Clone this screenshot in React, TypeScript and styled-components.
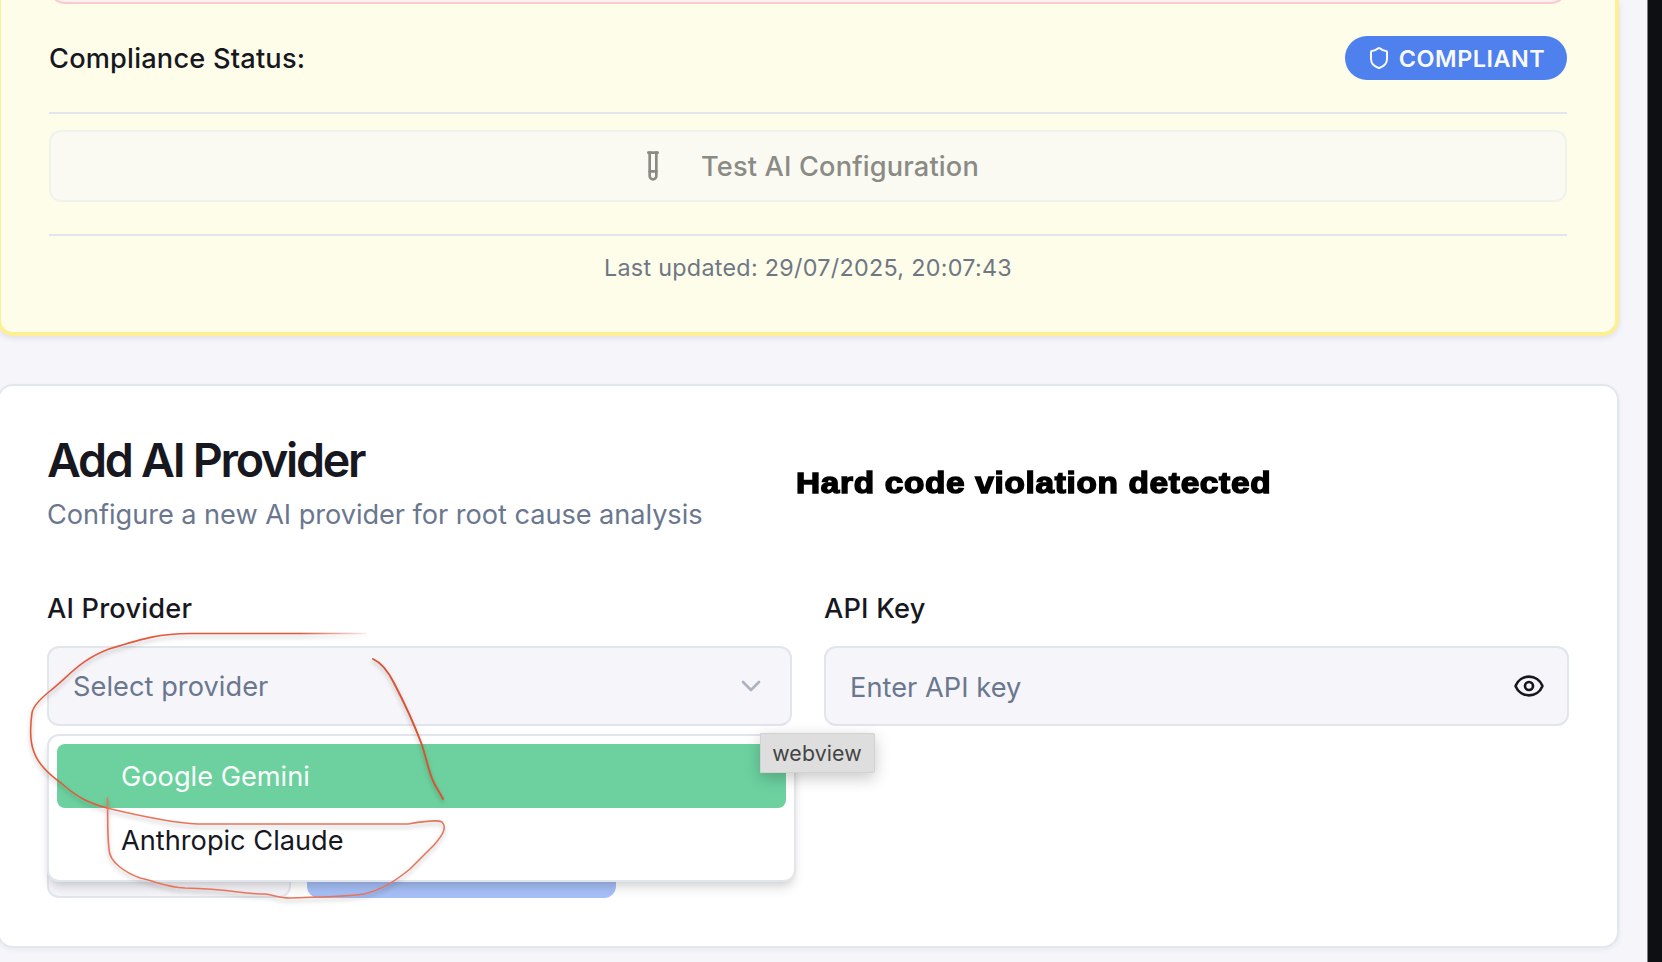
import React from "react";
import styled, { createGlobalStyle, css } from "styled-components";
import { ChevronDown, Eye, Shield, TestTube } from "lucide-react";

const GlobalStyle = createGlobalStyle`
  *, *::before, *::after { box-sizing: border-box; }
  html, body { margin: 0; padding: 0; overflow: hidden; }
  body { font-family: Inter, "Liberation Sans", sans-serif; color: #17181f; background: #f5f5fa; }
  button, input { font: inherit; margin: 0; }
`;

const Screen = styled.div`
  position: relative;
  display: flex;
  width: 1662px;
  height: 962px;
  overflow: hidden;
`;

const Main = styled.main`
  flex: 1;
  display: flex;
  flex-direction: column;
  gap: 48px;
  margin-left: -3px;
  padding-right: 28px;
  background: #f5f5fa;
`;

const Gutter = styled.aside`
  flex: none;
  width: 15px;
  background: #0e0f13;
  border-left: 1px solid #7c7c82;
`;

const StatusCard = styled.section`
  display: flex;
  flex-direction: column;
  height: 336px;
  padding: 0 48px;
  border: 4px solid #fdef93;
  border-top: 0;
  border-radius: 0 0 16px 16px;
  background: #fefdea;
  box-shadow: 0 2px 6px rgba(30, 30, 60, 0.1);
`;

const AlertEdge = styled.div`
  flex: none;
  height: 4px;
  overflow: hidden;
  display: flex;
  align-items: flex-end;

  &::after {
    content: "";
    flex: 1;
    height: 40px;
    border: 2px solid #f9cbca;
    border-radius: 16px;
    background: #fbf1f3;
  }
`;

const StatusRow = styled.div`
  display: flex;
  align-items: center;
  justify-content: space-between;
  height: 44px;
  margin-top: 32px;
`;

const Label = styled.div`
  height: 40px;
  padding-top: 1px;
  font-size: 27.2px;
  line-height: 40px;
  font-weight: 500;
  letter-spacing: 0.2px;
  color: #17181f;
`;

const Badge = styled.span`
  display: inline-flex;
  align-items: center;
  justify-content: center;
  gap: 8px;
  width: 222px;
  height: 44px;
  border-radius: 22px;
  background: #4e80ee;
  color: #f8faff;
  font-size: 23.4px;
  font-weight: 600;
  letter-spacing: 0.5px;
`;

const Divider = styled.hr`
  flex: none;
  width: 100%;
  height: 2px;
  margin: 32px 0 0;
  border: 0;
  background: #e2e6ec;
`;

const TestButton = styled.button`
  display: flex;
  align-items: center;
  justify-content: center;
  gap: 32px;
  height: 72px;
  margin-top: 16px;
  padding: 0;
  border: 2px solid #f0f2ec;
  border-radius: 12px;
  background: #fafaf2;
  color: #8b8b85;
  font-size: 27.2px;
  font-weight: 500;
  letter-spacing: 0.16px;
`;

const Updated = styled.p`
  margin: 16px 0 0;
  text-align: center;
  font-size: 23.3px;
  line-height: 32px;
  letter-spacing: 0.3px;
  color: #6f7785;
`;

const ProviderCard = styled.section`
  display: flex;
  flex-direction: column;
  height: 564px;
  padding: 48px;
  border: 2px solid #e2e6ed;
  border-radius: 16px;
  background: #fff;
  box-shadow: 0 2px 5px rgba(30, 30, 60, 0.06);
`;

const CardTitle = styled.h2`
  margin: 2px 0 0;
  font-size: 46.6px;
  line-height: 48px;
  font-weight: 600;
  letter-spacing: -2.27px;
`;

const CardText = styled.p`
  margin: 11px 0 0;
  font-size: 27.2px;
  line-height: 40px;
  letter-spacing: -0.06px;
  color: #6a778e;
`;

const FormGrid = styled.div`
  display: grid;
  grid-template-columns: 1fr 1fr;
  gap: 32px;
  margin-top: 53px;
`;

const Field = styled.div`
  position: relative;
  display: flex;
  flex-direction: column;
  gap: 18px;
`;

const Control = styled.div<{ $iconNudge?: number }>`
  display: flex;
  align-items: center;
  justify-content: space-between;
  height: 80px;
  padding: 0 24px;
  border: 2px solid #e1e6ec;
  border-radius: 12px;
  background: #f5f5fa;
  color: #6a778e;

  svg {
    flex: none;
    margin-right: ${(p) => -(p.$iconNudge ?? 0)}px;
  }
`;

const Placeholder = styled.span<{ $drop: number }>`
  padding-top: ${(p) => p.$drop * 2}px;
  font-size: 27.2px;
  line-height: 40px;
  letter-spacing: 0.05px;
`;

const Menu = styled.ul`
  position: absolute;
  z-index: 2;
  top: 146px;
  left: 0;
  width: 749px;
  height: 148px;
  margin: 0;
  padding: 8px;
  list-style: none;
  border: 2px solid #e1e6ec;
  border-radius: 12px;
  background: #fff;
  box-shadow: 0 8px 12px -2px rgba(0, 0, 0, 0.12), 0 4px 8px -4px rgba(0, 0, 0, 0.12);
`;

const MenuItem = styled.li<{ $active?: boolean }>`
  display: flex;
  align-items: center;
  height: 64px;
  padding-left: 64px;
  border-radius: 8px;
  font-size: 27.2px;
  ${(p) =>
    p.$active &&
    css`
      background: #6cd19f;
      color: #fafffc;
    `}
`;

const Actions = styled.div`
  display: flex;
  gap: 16px;
  margin-top: auto;
`;

const ActionButton = styled.button<{ $primary?: boolean }>`
  width: ${(p) => (p.$primary ? 309 : 244)}px;
  height: 72px;
  border: ${(p) => (p.$primary ? "0" : "2px solid #e4e6ee")};
  border-radius: 12px;
  background: ${(p) => (p.$primary ? "#a6bff6" : "#f5f5fa")};
`;

const Tooltip = styled.div`
  position: absolute;
  z-index: 3;
  top: 733px;
  left: 760px;
  width: 115px;
  height: 40px;
  display: flex;
  align-items: center;
  justify-content: center;
  padding-right: 1px;
  border: 1px solid #d2d2d2;
  border-radius: 0 2px 2px 0;
  background: #dedede;
  box-shadow: 0 5px 16px rgba(0, 0, 0, 0.22);
  color: #444;
  font-size: 21.3px;
  letter-spacing: 0.15px;
`;

const Note = styled.div`
  position: absolute;
  z-index: 3;
  top: 465px;
  left: 796px;
  font-family: "Liberation Sans", Arial, sans-serif;
  font-size: 29px;
  line-height: 36px;
  font-weight: 700;
  letter-spacing: 0.6px;
  white-space: nowrap;
  color: #000;
  -webkit-text-stroke: 1.4px #000;
  transform: scaleX(1.15);
  transform-origin: left center;
`;

const Scribble = styled.svg`
  position: absolute;
  z-index: 4;
  top: 0;
  left: 0;
  pointer-events: none;
  filter: drop-shadow(0 3px 2px rgba(0, 0, 0, 0.25));
`;

function Annotations() {
  return (
    <Scribble width="500" height="962" fill="none" strokeLinecap="round" strokeLinejoin="round" strokeWidth="1.6">
      <defs>
        <linearGradient id="fade" gradientUnits="userSpaceOnUse" x1="30" y1="0" x2="368" y2="0">
          <stop offset="0" stopColor="#e4593b" />
          <stop offset="0.8" stopColor="#e4593b" />
          <stop offset="1" stopColor="#e4593b" stopOpacity="0.1" />
        </linearGradient>
      </defs>
      <path
        stroke="url(#fade)"
        d="M366 633.5H190C160 633.5 145 638 109 649C80 660 70 675 50 691C40 699 33 706 32 713C30 727 30 742 34 752C38 764 50 775 61 783C78 798 89 803 107 808"
      />
      <path stroke="#e8745b" d="M107 808C140 816 174 823 198 824H408C420 822 437 819 442 822C448 828 441 837 434 845L410 869C394 882 381 890 364 894C346 897 310 897 290 898C280 898 273 895 265 894C248 895 232 889 185 888C166 887 158 882 140 878C126 873 109 862 109 849C107 832 108 815 107.5 798" />
      <path stroke="#d9532f" strokeWidth="1.9" d="M373 659C382 663 388 671 394 683C405 704 416 729 422 745C427 761 429 773 434 783C437 789 440 793 443 799" />
    </Scribble>
  );
}

export default function App() {
  return (
    <>
      <GlobalStyle />
      <Screen>
        <Main>
          <StatusCard>
            <AlertEdge />
            <StatusRow>
              <Label>Compliance Status:</Label>
              <Badge>
                <Shield size={24} strokeWidth={2} />
                COMPLIANT
              </Badge>
            </StatusRow>
            <Divider />
            <TestButton disabled>
              <TestTube size={32} />
              Test AI Configuration
            </TestButton>
            <Divider />
            <Updated>Last updated: 29/07/2025, 20:07:43</Updated>
          </StatusCard>

          <ProviderCard>
            <CardTitle>Add AI Provider</CardTitle>
            <CardText>Configure a new AI provider for root cause analysis</CardText>
            <FormGrid>
              <Field>
                <Label>AI Provider</Label>
                <Control $iconNudge={1}>
                  <Placeholder $drop={1}>Select provider</Placeholder>
                  <ChevronDown size={32} color="#adb3c0" />
                </Control>
                <Menu>
                  <MenuItem $active>Google Gemini</MenuItem>
                  <MenuItem>Anthropic Claude</MenuItem>
                </Menu>
              </Field>
              <Field>
                <Label>API Key</Label>
                <Control $iconNudge={2}>
                  <Placeholder $drop={2}>Enter API key</Placeholder>
                  <Eye size={32} color="#17181f" />
                </Control>
              </Field>
            </FormGrid>
            <Actions>
              <ActionButton />
              <ActionButton $primary />
            </Actions>
          </ProviderCard>
        </Main>
        <Gutter />
        <Note>Hard code violation detected</Note>
        <Tooltip>webview</Tooltip>
        <Annotations />
      </Screen>
    </>
  );
}
